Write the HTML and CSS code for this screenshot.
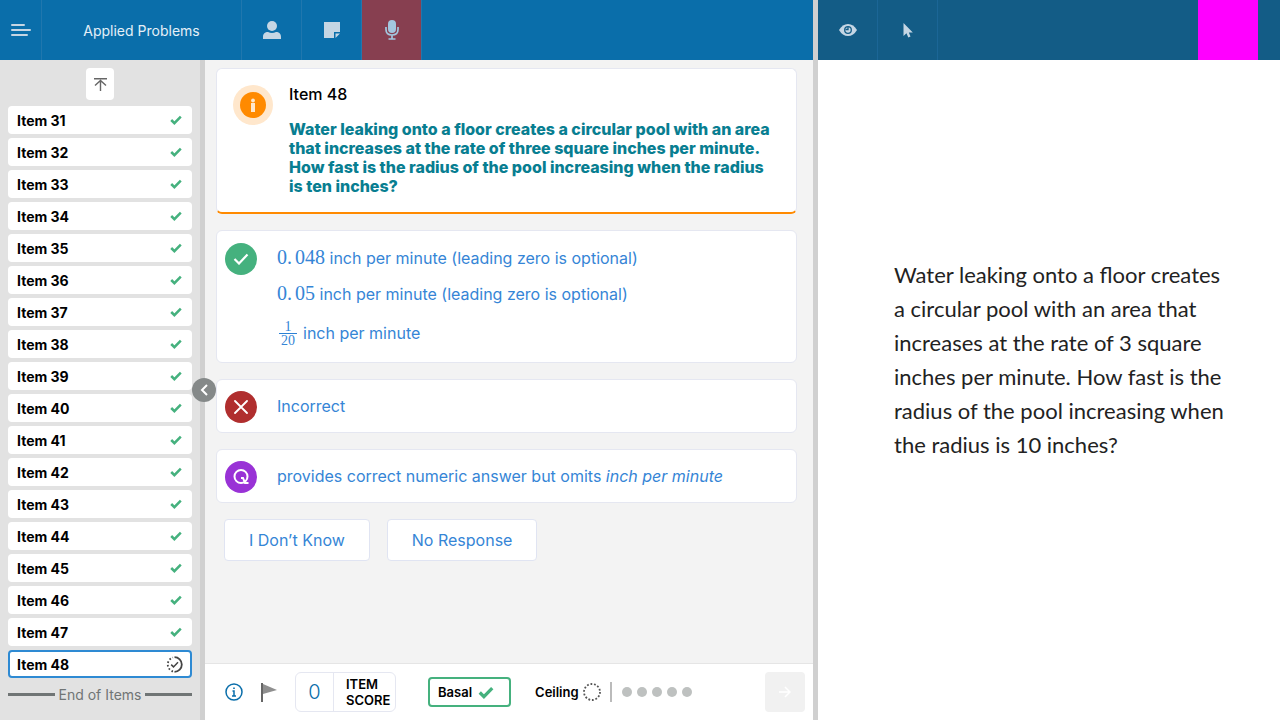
FILE: index.html
```html
<!DOCTYPE html>
<html lang="en">
<head>
<meta charset="utf-8">
<title>Applied Problems</title>
<link rel="stylesheet" href="styles.css">
</head>
<body>
<svg class="sprite" aria-hidden="true">
  <symbol id="tick" viewBox="0 0 12 10"><path d="M1.2 5 4.4 8.2 10.8 1.6" fill="none" stroke="currentColor" stroke-width="2.5"/></symbol>
</svg>
<div class="app">
  <section class="examiner">
    <header class="topbar">
      <button class="tool tool-menu" aria-label="Menu"><svg width="20" height="12" viewBox="0 0 20 12"><path d="M1 1H13M1 6H19M1 11H16" stroke="currentColor" stroke-width="2" stroke-linecap="round"/></svg></button>
      <h1 class="title">Applied Problems</h1>
      <button class="tool" aria-label="Examinee"><svg width="18" height="18" viewBox="0 0 18 18" fill="currentColor"><circle cx="9" cy="5" r="5"/><path d="M0 18V16C0 12.500 2 11 5 11Q9 13 13 11C16 11 18 12.500 18 16V18Z"/></svg></button>
      <button class="tool" aria-label="Notes"><svg width="16" height="16" viewBox="0 0 16 16" fill="currentColor"><path d="M0 0H16V10H10V16H0Z"/><path d="M11.500 11.500H16L11.500 16Z"/></svg></button>
      <button class="tool tool-record" aria-label="Record audio"><svg width="14" height="20" viewBox="0 0 14 20"><rect x="3" y="0" width="8" height="13" rx="4" fill="#a3c7df"/><path d="M1 7V9.500C1 13 3.500 15 7 15S13 13 13 9.500V7M7 15V19M3.500 19H10.500" fill="none" stroke="#a3c7df" stroke-width="1.700"/></svg></button>
    </header>
    <div class="workspace">
      <nav class="sidebar" aria-label="Items">
        <button class="to-top" aria-label="Scroll to top"><svg width="13" height="13" viewBox="0 0 13 13" fill="none" stroke="#666" stroke-width="1.400"><path d="M0 .7H13M6.500 13V2.500M1 7.500 6.500 2.500 12 7.500"/></svg></button>
        <ul class="items">
          <li><button class="item">Item 31<svg class="tick"><use href="#tick"/></svg></button></li>
          <li><button class="item">Item 32<svg class="tick"><use href="#tick"/></svg></button></li>
          <li><button class="item">Item 33<svg class="tick"><use href="#tick"/></svg></button></li>
          <li><button class="item">Item 34<svg class="tick"><use href="#tick"/></svg></button></li>
          <li><button class="item">Item 35<svg class="tick"><use href="#tick"/></svg></button></li>
          <li><button class="item">Item 36<svg class="tick"><use href="#tick"/></svg></button></li>
          <li><button class="item">Item 37<svg class="tick"><use href="#tick"/></svg></button></li>
          <li><button class="item">Item 38<svg class="tick"><use href="#tick"/></svg></button></li>
          <li><button class="item">Item 39<svg class="tick"><use href="#tick"/></svg></button></li>
          <li><button class="item">Item 40<svg class="tick"><use href="#tick"/></svg></button></li>
          <li><button class="item">Item 41<svg class="tick"><use href="#tick"/></svg></button></li>
          <li><button class="item">Item 42<svg class="tick"><use href="#tick"/></svg></button></li>
          <li><button class="item">Item 43<svg class="tick"><use href="#tick"/></svg></button></li>
          <li><button class="item">Item 44<svg class="tick"><use href="#tick"/></svg></button></li>
          <li><button class="item">Item 45<svg class="tick"><use href="#tick"/></svg></button></li>
          <li><button class="item">Item 46<svg class="tick"><use href="#tick"/></svg></button></li>
          <li><button class="item">Item 47<svg class="tick"><use href="#tick"/></svg></button></li>
          <li><button class="item item-current" aria-current="true">Item 48<svg width="17" height="17" viewBox="0 0 17 17" fill="none" stroke="#444"><path d="M8.500 1.200A7.300 7.300 0 0 1 8.500 15.800" stroke-width="1.800"/><path d="M7 15.500A7.300 7.300 0 0 1 7 1.500" stroke-width="1.800" stroke-dasharray="1.600 2"/><path d="M5.200 8.600 7.500 10.900 12 6.200" stroke-width="1.500"/></svg></button></li>
        </ul>
        <p class="end">End of Items</p>
      </nav>
      <div class="divider"><button class="collapse" aria-label="Collapse item list"><svg width="8" height="12" viewBox="0 0 8 12"><path d="M7 1 2 6 7 11" fill="none" stroke="#fff" stroke-width="2"/></svg></button></div>
      <main class="main">
        <div class="content">
          <article class="card question">
            <svg class="info-badge" width="40" height="40" viewBox="0 0 40 40"><circle cx="20" cy="20" r="20" fill="#ffe7cc"/><circle cx="20" cy="20" r="13" fill="#ff8a00"/><rect x="18" y="18" width="4" height="9" fill="#ffe7cc"/><circle cx="20" cy="15.500" r="1.900" fill="#ffe7cc"/></svg>
            <div>
              <h2 class="item-title">Item 48</h2>
              <p class="prompt">Water leaking onto a floor creates a circular pool with an area that increases at the rate of three square inches per minute. How fast is the radius of the pool increasing when the radius is ten inches?</p>
            </div>
          </article>
          <section class="card answer answer-correct">
            <button class="mark mark-correct" aria-label="Correct"><svg width="16" height="12" viewBox="0 0 16 12"><path d="M1.500 6 6 10.500 14.500 1.500" fill="none" stroke="#fff" stroke-width="2.200"/></svg></button>
            <ul class="responses">
              <li><span class="math">0.<span class="decimals">048</span></span> inch per minute (leading zero is optional)</li>
              <li><span class="math">0.<span class="decimals">05</span></span> inch per minute (leading zero is optional)</li>
              <li class="with-fraction"><span class="fraction"><span>1</span><span class="denominator">20</span></span> inch per minute</li>
            </ul>
          </section>
          <section class="card answer">
            <button class="mark mark-incorrect" aria-label="Incorrect"><svg width="14" height="14" viewBox="0 0 14 14"><path d="M1 1 13 13M13 1 1 13" stroke="#fff" stroke-width="1.800" stroke-linecap="round"/></svg></button>
            <p class="response">Incorrect</p>
          </section>
          <section class="card answer">
            <button class="mark mark-query" aria-label="Query"><svg width="16" height="16" viewBox="0 0 16 16" fill="none" stroke="#fff" stroke-width="2"><circle cx="8" cy="7.500" r="6.500"/><path d="M8 9H10L12 14H15.500"/></svg></button>
            <p class="response">provides correct numeric answer but omits <em>inch per minute</em></p>
          </section>
          <div class="choices">
            <button class="choice">I Don’t Know</button>
            <button class="choice">No Response</button>
          </div>
        </div>
        <footer class="statusbar">
          <button class="plain" aria-label="Item information"><svg width="18" height="18" viewBox="0 0 18 18" fill="none" stroke="#0a6eaa" stroke-width="1.500"><circle cx="9" cy="9" r="8"/><path d="M7.500 8H9V13M7 13H11M8.200 5.200H9.800"/></svg></button>
          <button class="plain flag" aria-label="Flag item"><svg width="16" height="19" viewBox="0 0 16 19"><path d="M2 1 16 7 2 11Z" fill="#8f8f8f"/><path d="M1 0V19" stroke="#666" stroke-width="2"/></svg></button>
          <div class="score"><output class="score-value" id="score">0</output><label class="score-label" for="score">ITEM SCORE</label></div>
          <div class="basal">Basal<svg class="tick-large"><use href="#tick"/></svg></div>
          <div class="ceiling">Ceiling<svg width="18" height="18" viewBox="0 0 18 18"><circle cx="9" cy="9" r="8" fill="none" stroke="#555" stroke-width="1.800" stroke-dasharray="1.800 1.790"/></svg></div>
          <div class="progress"><i></i><i></i><i></i><i></i><i></i></div>
          <button class="next" aria-label="Next" disabled><svg width="12" height="12" viewBox="0 0 12 12"><path d="M0 6H11M6 1 11 6 6 11" fill="none" stroke="#fff" stroke-width="1.500"/></svg></button>
        </footer>
      </main>
    </div>
  </section>
  <div class="divider"></div>
  <section class="examinee">
    <header class="topbar topbar-dark">
      <button class="tool" aria-label="Preview"><svg width="18" height="12" viewBox="0 0 18 12"><path d="M0 6Q3.500 0 9 0T18 6Q14.500 12 9 12T0 6Z" fill="currentColor"/><circle cx="9" cy="6" r="3.300" fill="none" stroke="#135c86" stroke-width="1.300"/><path d="M9 3V5.500H6.500" fill="none" stroke="#135c86" stroke-width="1.300"/></svg></button>
      <button class="tool" aria-label="Pointer"><svg width="10" height="15" viewBox="0 0 10 15"><path d="M.5 0V13L3.500 10.200 5.300 14.500 7.500 13.600 5.800 9.500H9.800Z" fill="currentColor"/></svg></button>
      <div class="swatch"></div>
    </header>
    <div class="stimulus">
      <p class="stimulus-text">Water leaking onto a floor creates a circular pool with an area that increases at the rate of 3 square inches per minute. How fast is the radius of the pool increasing when the radius is 10 inches?</p>
    </div>
  </section>
</div>
</body>
</html>
```

FILE: styles.css
```css
*, *::before, *::after { box-sizing: border-box; }
body, h1, h2, p, ul { margin: 0; padding: 0; }
ul { list-style: none; }
body { font-family: Inter, "Liberation Sans", sans-serif; color: #000; }
button { margin: 0; padding: 0; border: 0; font: inherit; color: inherit; background: none; }
svg { flex: none; display: block; }
.sprite { position: absolute; width: 0; height: 0; }

.app { display: grid; grid-template-columns: 813fr 5px 462fr; height: 100vh; overflow: hidden; }
.examiner, .examinee { display: flex; flex-direction: column; min-width: 0; min-height: 0; }
.divider { position: relative; flex: none; width: 5px; background: #d0d0d0; }

.topbar { display: flex; flex: none; height: 60px; background: #0a6eaa; color: #c5d6e4; }
.topbar-dark { background: #135c86; }
.tool { display: flex; align-items: center; justify-content: center; width: 60px; border-right: 1px solid #2077ae; }
.topbar-dark .tool { border-color: #1b6696; }
.tool-menu { width: 42px; }
.tool-record { background: #873f50; }
.title { display: flex; align-items: center; justify-content: center; width: 200px; border-right: 1px solid #2077ae; font-size: 14px; font-weight: 400; color: #e4f0f8; }
.swatch { width: 60px; margin-left: auto; margin-right: 22px; background: #f0f; }

.workspace { display: flex; flex: 1; min-height: 0; }
.sidebar { flex: none; width: 200px; padding: 8px; background: #e2e2e2; }
.to-top { display: flex; align-items: center; justify-content: center; width: 28px; height: 32px; margin: 0 auto 6px; border-radius: 4px; background: #fff; }
.items { display: flex; flex-direction: column; gap: 4px; }
.item { display: flex; align-items: center; justify-content: space-between; width: 100%; height: 28px; padding: 0 10px 0 9px; border-radius: 4px; background: #fff; font-size: 14px; font-weight: 700; text-align: left; }
.item-current { padding: 0 7px; border: 2px solid #2e8ad3; }
.tick { width: 12px; height: 10px; color: #45b17e; }
.end { display: flex; align-items: center; gap: 4px; margin-top: 8px; font-size: 14px; line-height: 17px; color: #707575; }
.end::before, .end::after { content: ""; flex: 1; height: 3px; background: #707575; }
.collapse { position: absolute; top: 50%; left: 100%; display: flex; align-items: center; justify-content: center; width: 24px; height: 24px; margin: -12px 0 0 -13px; border-radius: 50%; background: #858989; }

.main { display: flex; flex: 1; flex-direction: column; min-width: 0; background: #f3f3f3; }
.content { display: flex; flex: 1; flex-direction: column; gap: 16px; padding: 8px 16px 8px 11px; }
.card { display: flex; border: 1px solid #e5e7f1; border-radius: 6px; background: #fff; }
.question { gap: 16px; padding: 16px 24px 16px 16px; border-bottom: 2px solid #ff8a00; }
.item-title { font-size: 16px; font-weight: 500; line-height: 19px; }
.prompt { margin-top: 16px; font-size: 16px; font-weight: 800; line-height: 19px; color: #087e91; }
.answer { gap: 20px; padding: 11px 8px; font-size: 16px; font-weight: 400; color: #3585d6; }
.mark { display: flex; flex: none; align-items: center; justify-content: center; width: 32px; height: 32px; border-radius: 50%; }
.mark-correct { background: #45b17e; }
.mark-incorrect { background: #b02e2e; }
.mark-query { background: #9932d6; }
.answer-correct { padding-top: 12px; }
.answer:not(.answer-correct) { height: 54px; }
.response { line-height: 30px; }
.responses { display: grid; grid-template-rows: 28px 44px 36px; align-items: center; }
.math { font-family: "Liberation Serif", serif; font-size: 20px; line-height: 20px; }
.decimals { margin-left: 3px; }
.with-fraction { display: flex; align-items: center; gap: 6px; }
.fraction { display: flex; flex-direction: column; width: 18px; margin-left: 2px; font-family: "Liberation Serif", serif; font-size: 14px; line-height: 13px; text-align: center; }
.denominator { border-top: 1px solid #2b80d4; }
.choices { display: flex; gap: 17px; padding-left: 8px; }
.choice { height: 42px; padding: 0 24px; border: 1px solid #e0e4f2; border-radius: 4px; background: #fff; font-size: 16px; font-weight: 400; color: #3585d6; }

.statusbar { display: flex; flex: none; align-items: center; height: 57px; padding: 0 8px 0 20px; border-top: 1px solid #e5e5e5; background: #fff; font-size: 13px; font-weight: 600; }
.flag { margin-left: 18px; }
.score { display: flex; align-items: center; height: 40px; margin-left: 18px; border: 1px solid #e5e7f1; border-radius: 6px; }
.score-value { width: 38px; border-right: 1px solid #e5e7f1; font-size: 20px; font-weight: 300; line-height: 38px; text-align: center; color: #0a6eaa; }
.score-label { width: 61px; padding-left: 12px; line-height: 16px; }
.basal { display: flex; align-items: center; gap: 6px; height: 30px; margin-left: 32px; padding: 0 15px 0 8px; border: 2px solid #45b17e; border-radius: 4px; }
.tick-large { width: 16px; height: 13px; color: #45b17e; }
.ceiling { display: flex; align-items: center; gap: 4px; margin-left: 24px; }
.progress { display: flex; align-items: center; gap: 5px; height: 20px; margin-left: 9px; padding-left: 10px; border-left: 2px solid #bbb; }
.progress i { width: 10px; height: 10px; border-radius: 50%; background: #bec1c0; }
.next { display: flex; align-items: center; justify-content: center; width: 40px; height: 40px; margin-left: auto; border-radius: 4px; background: #f1f1f1; }

.stimulus { display: flex; flex: 1; align-items: center; justify-content: center; padding: 0 32px 60px 56px; background: #fff; }
.stimulus-text { max-width: 334px; font-family: Lato, "Open Sans", sans-serif; font-size: 22px; line-height: 34px; color: #222; }
```
